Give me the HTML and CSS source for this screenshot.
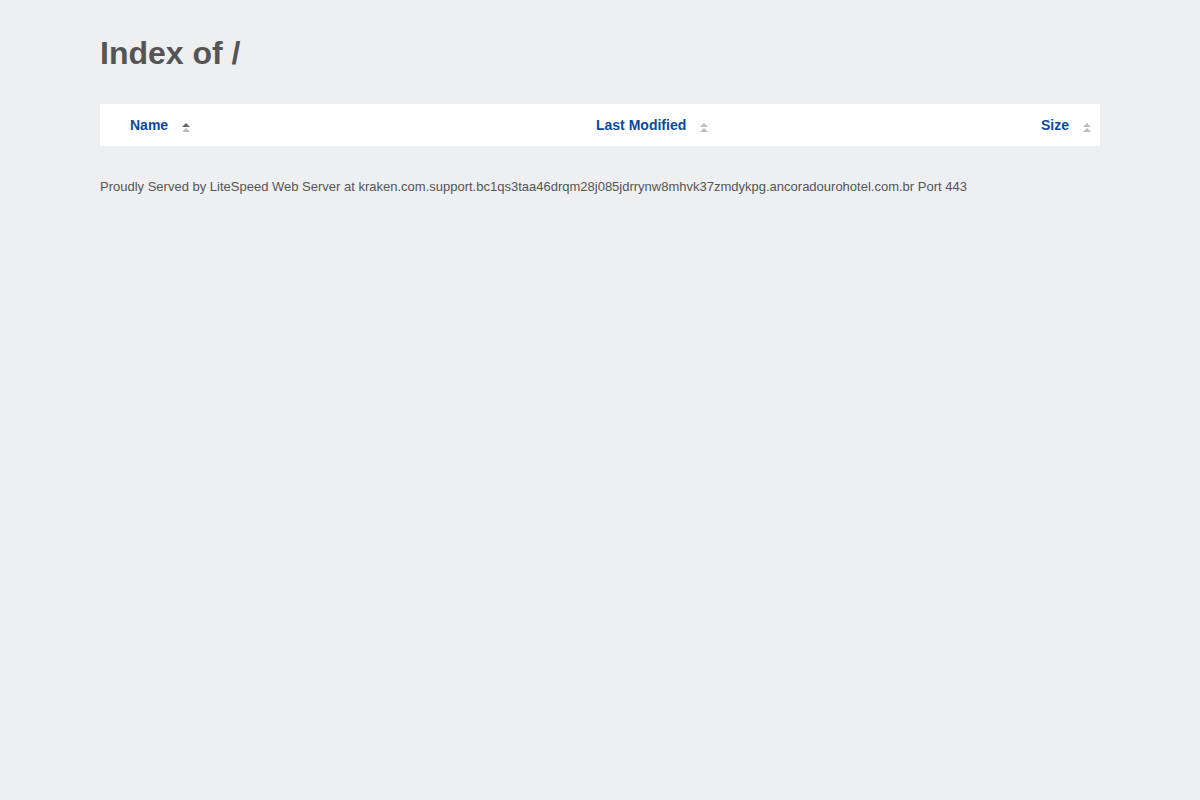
FILE: index.html
```html
<!DOCTYPE html>
<html>
<head>
<meta charset="utf-8">
<title>Index of /</title>
<link rel="stylesheet" href="styles.css">
</head>
<body>
<div class="wrap">
  <h1 class="title">Index of /</h1>
  <table class="listing">
    <thead>
      <tr>
        <th class="col-name"><a href="#">Name</a><span class="sort sort-active"><i class="up"></i><i class="down"></i></span></th>
        <th class="col-mod"><a href="#">Last Modified</a><span class="sort"><i class="up"></i><i class="down"></i></span></th>
        <th class="col-size"><a href="#">Size</a><span class="sort"><i class="up"></i><i class="down"></i></span></th>
      </tr>
    </thead>
  </table>
  <p class="footer">Proudly Served by LiteSpeed Web Server at kraken.com.support.bc1qs3taa46drqm28j085jdrrynw8mhvk37zmdykpg.ancoradourohotel.com.br Port 443</p>
</div>
</body>
</html>
```

FILE: styles.css
```css
html, body {
  margin: 0;
  padding: 0;
  background: #eeeff1;
  font-family: "Liberation Sans", Arial, sans-serif;
  color: #555;
}
.wrap {
  width: 1000px;
  margin: 0 auto;
  padding-top: 35px;
}
.title {
  font-size: 32px;
  font-weight: bold;
  margin: 0 0 32px 0;
  line-height: 37px;
  color: #555;
}
.listing {
  width: 1000px;
  border-collapse: collapse;
  background: #fff;
}
.listing th {
  height: 42px;
  padding: 0;
  font-size: 14px;
  line-height: 20px;
  font-weight: bold;
  text-align: left;
  vertical-align: middle;
}
.listing a {
  color: #0b4a9c;
  text-decoration: none;
}
.col-name {
  padding-left: 30px !important;
  width: 466px;
}
.col-mod {
  width: 300px;
}
.col-size {
  text-align: right !important;
  padding-right: 9px !important;
}
.sort {
  display: inline-flex;
  flex-direction: column;
  gap: 1px;
  margin-left: 14px;
  vertical-align: 3px;
}
.sort i {
  display: block;
  width: 0;
  height: 0;
  border-left: 4px solid transparent;
  border-right: 4px solid transparent;
  border-bottom: 4px solid #bbb;
}
.sort-active .up {
  border-bottom-color: #666;
}
.footer {
  margin: 33px 0 0 0;
  font-size: 13px;
  line-height: 15px;
  color: #555;
}
```
